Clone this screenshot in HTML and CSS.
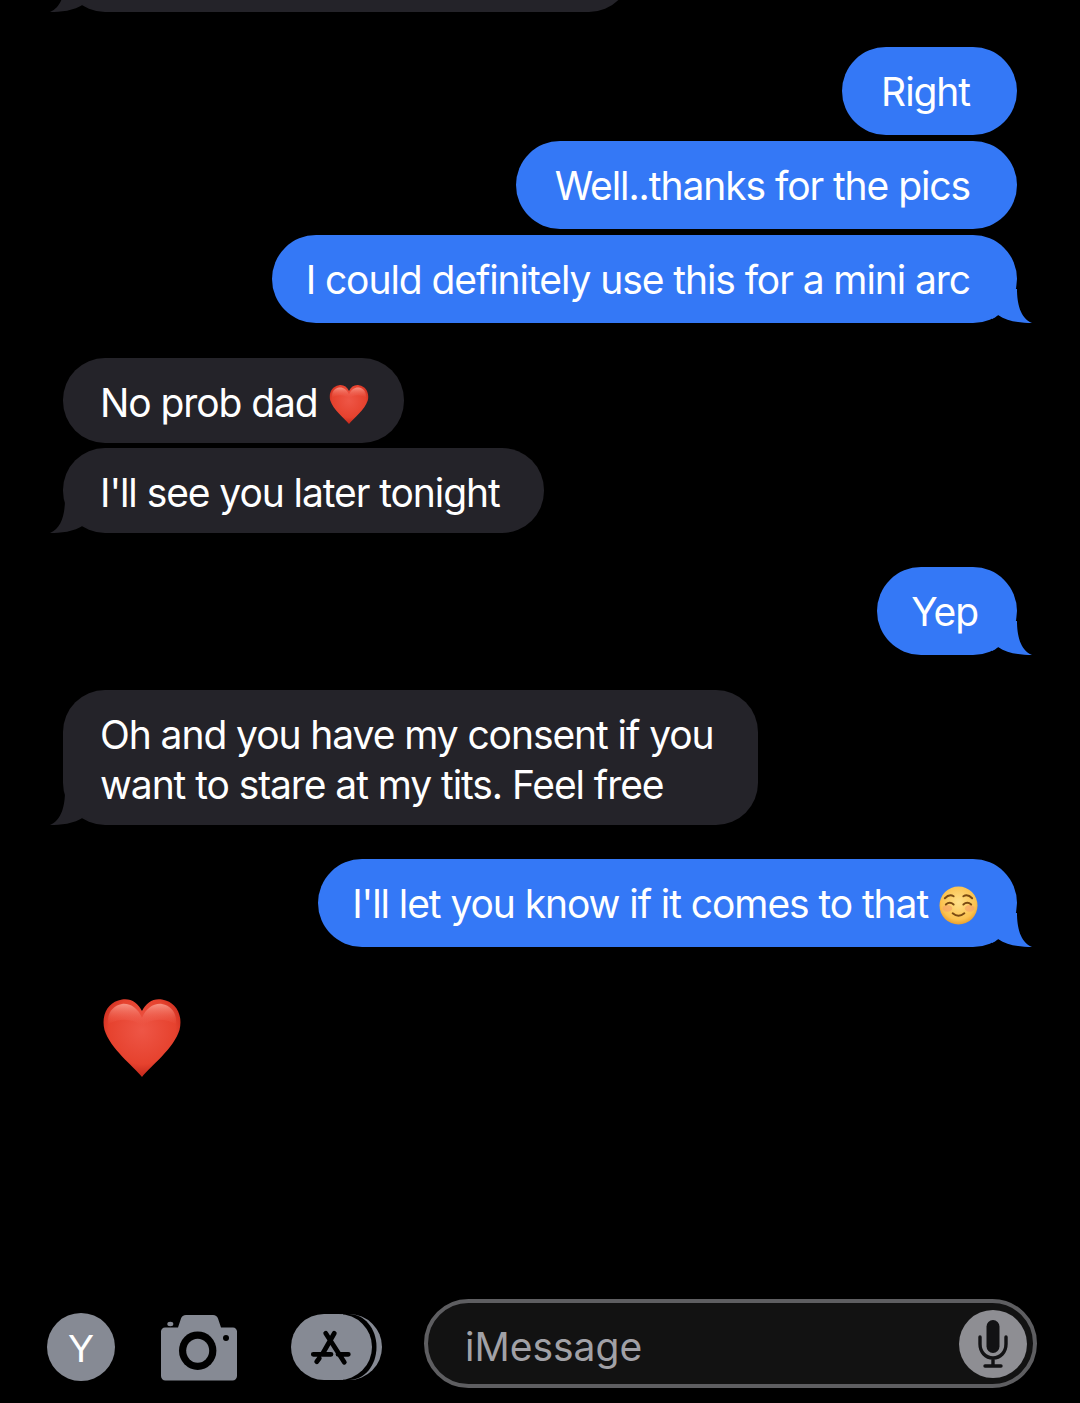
FILE: index.html
```html
<!DOCTYPE html>
<html lang="en">
<head>
<meta charset="utf-8">
<title>iMessage</title>
<link rel="stylesheet" href="styles.css">
</head>
<body>
<svg class="defs" width="0" height="0" aria-hidden="true">
  <defs>
    <radialGradient id="heartFill" cx="0.5" cy="0.4" r="0.62">
      <stop offset="0" stop-color="#ee5646"/>
      <stop offset="0.7" stop-color="#e6422e"/>
      <stop offset="1" stop-color="#bf2419"/>
    </radialGradient>
    <linearGradient id="heartShine" x1="0" y1="0" x2="0" y2="1">
      <stop offset="0" stop-color="#ffb4a6" stop-opacity="0.7"/>
      <stop offset="1" stop-color="#f0584a" stop-opacity="0"/>
    </linearGradient>
    <radialGradient id="faceFill" cx="0.5" cy="0.42" r="0.6">
      <stop offset="0" stop-color="#ffe08a"/>
      <stop offset="0.75" stop-color="#fbc24f"/>
      <stop offset="1" stop-color="#e69a2a"/>
    </radialGradient>
    <symbol id="heart" viewBox="0 0 80 80">
      <path d="M40 79C31 68 8 50 2.500 32C-1 18 5 4 20 1.500C29 0 36 5 40 13C44 5 51 0 60 1.500C75 4 81 18 77.500 32C72 50 49 68 40 79Z" fill="url(#heartFill)"/>
      <path d="M40 20C36 10 28 5 20 6C10 8 5 16 6 26C18 20 30 20 40 28C50 20 62 20 74 26C75 16 70 8 60 6C52 5 44 10 40 20Z" fill="url(#heartShine)"/>
    </symbol>
    <symbol id="tailRight" viewBox="0 0 40 34">
      <path d="M0 0H25C25 14 28 29 40 34C30 34 16 33 6 26C4 28 2 29 0 30Z"/>
    </symbol>
    <symbol id="tailLeft" viewBox="0 0 40 34">
      <path d="M40 0H15C15 14 12 29 0 34C10 34 24 33 34 26C36 28 38 29 40 30Z"/>
    </symbol>
  </defs>
</svg>
<main class="screen">
  <section class="thread">
    <div class="row row-in row-clipped"><div class="bubble in tailed wide-top"><span class="spacer">&nbsp;</span><svg class="tail tail-in"><use href="#tailLeft"/></svg></div></div>
    <div class="row row-out gap-l"><div class="bubble out roomy">Right</div></div>
    <div class="row row-out gap-s"><div class="bubble out roomy">Well..thanks for the pics</div></div>
    <div class="row row-out gap-s"><div class="bubble out tailed">I could definitely use this for a mini arc<svg class="tail tail-out"><use href="#tailRight"/></svg></div></div>
    <div class="row row-in gap-l"><div class="bubble in snug-in">No prob dad <svg class="emoji emoji-heart"><use href="#heart"/></svg></div></div>
    <div class="row row-in gap-xs"><div class="bubble in tailed">I'll see you later tonight<svg class="tail tail-in"><use href="#tailLeft"/></svg></div></div>
    <div class="row row-out gap-m"><div class="bubble out tailed snug-out">Yep<svg class="tail tail-out"><use href="#tailRight"/></svg></div></div>
    <div class="row row-in gap-l"><div class="bubble in tailed">Oh and you have my consent if you<br>want to stare at my tits. Feel free<svg class="tail tail-in"><use href="#tailLeft"/></svg></div></div>
    <div class="row row-out gap-m"><div class="bubble out tailed snug-out">I'll let you know if it comes to that <svg class="emoji emoji-face" viewBox="0 0 40 40">
      <circle cx="20" cy="20" r="19.500" fill="url(#faceFill)"/>
      <ellipse cx="8.500" cy="23" rx="5" ry="3.500" fill="#f59a6a" opacity="0.55"/>
      <ellipse cx="31.500" cy="23" rx="5" ry="3.500" fill="#f59a6a" opacity="0.55"/>
      <path d="M6 12.500Q10.500 8 15 10.500M25 10.500Q29.500 8 34 12.500M7 19Q11 15.500 15 19M25 19Q29 15.500 33 19M14 28Q20 33 26 28" fill="none" stroke="#7a4a12" stroke-width="2" stroke-linecap="round"/>
    </svg><svg class="tail tail-out"><use href="#tailRight"/></svg></div></div>
    <div class="row row-in big-heart"><svg class="emoji-large"><use href="#heart"/></svg></div>
  </section>

  <footer class="composer">
    <div class="avatar">Y</div>
    <svg class="camera" viewBox="0 0 76 66">
      <path class="glyph-fill" d="M4 12.500H17L20 3.500C20.800 1.200 22.500 0 25 0H52C54.500 0 56.200 1.200 57 3.500L60 12.500H72C74.200 12.500 76 14.300 76 16.500V61C76 63.500 74 65.500 71.500 65.500H4.500C2 65.500 0 63.500 0 61V16.500C0 14.300 1.800 12.500 4 12.500Z"/>
      <ellipse class="glyph-fill" cx="9.300" cy="9" rx="3" ry="2.200"/>
      <ellipse cx="36.700" cy="35.700" rx="18.700" ry="19.300" fill="#000"/>
      <ellipse class="glyph-fill" cx="36.700" cy="35.700" rx="11.500" ry="12"/>
      <circle cx="65" cy="23" r="3" fill="#000"/>
    </svg>
    <svg class="appstore" viewBox="0 0 91 66">
      <rect class="glyph-fill" x="20" y="0" width="71" height="66" rx="33"/>
      <path d="M52 0H58C73 0 85.500 14 85.500 33S73 66 58 66H52Z" fill="#000"/>
      <rect class="glyph-fill" x="0" y="0" width="81" height="66" rx="33"/>
      <path d="M34.700 19.300L53.300 48.300M43.300 19.300L31.300 40.300M22.300 40.300H40M47 40.300H57.300M25.700 47.700L28.300 44.300" fill="none" stroke="#000" stroke-width="4.800" stroke-linecap="round"/>
    </svg>
    <div class="field">
      <span class="placeholder">iMessage</span>
      <div class="mic">
        <svg class="mic-glyph" viewBox="0 0 30 48">
          <rect x="8.500" y="0" width="13" height="33" rx="6.500" fill="#121214"/>
          <path d="M2 17V24C2 32 7.500 38 15 38S28 32 28 24V17M15 38V45M7 46H23" fill="none" stroke="#121214" stroke-width="3.400" stroke-linecap="round"/>
        </svg>
      </div>
    </div>
  </footer>
</main>
</body>
</html>
```
FILE: styles.css
```css
* { box-sizing: border-box; }
html, body { margin: 0; padding: 0; background: #000; }
body { width: 1080px; height: 1403px; overflow: hidden; }
.defs { position: absolute; }
.screen {
  display: flex;
  flex-direction: column;
  width: 1080px;
  height: 1403px;
  font-family: Inter, "Liberation Sans", sans-serif;
  color: #fff;
}
.thread { display: flex; flex-direction: column; }
.row { display: flex; }
.row-out { justify-content: flex-end; padding-right: 63px; }
.row-in { justify-content: flex-start; padding-left: 63px; }
.row-clipped { margin-top: -73px; }
.gap-l { margin-top: 35px; }
.gap-m { margin-top: 34px; }
.gap-s { margin-top: 6px; }
.gap-xs { margin-top: 5px; }
.bubble {
  position: relative;
  font-size: 39px;
  letter-spacing: -1.08px;
  line-height: 50px;
  white-space: nowrap;
  border-radius: 44px;
}
.out {
  background: #3478f6;
  padding: 20px 47px 18px 34px;
  fill: #3478f6;
}
.in {
  background: #242329;
  padding: 19.500px 44px 15.500px 37px;
  fill: #242329;
  border-radius: 42px;
}
.roomy { padding-left: 39px; }
.snug-out { padding-right: 39px; }
.snug-in { padding-right: 35px; }
.wide-top { width: 568px; }
.spacer { display: inline-block; }
.tail { position: absolute; bottom: 0; width: 40px; height: 34px; }
.tail-out { right: -15px; }
.tail-in { left: -13px; }
.emoji { display: inline-block; vertical-align: middle; }
.emoji-heart { width: 40px; height: 41px; margin-left: 1px; margin-top: -3px; }
.emoji-face { width: 39px; height: 39px; margin-left: 1px; margin-top: -4px; }
.big-heart { margin-top: 51px; padding-left: 102px; }
.emoji-large { width: 80px; height: 80px; }
.composer {
  display: flex;
  align-items: flex-end;
  margin-top: auto;
  padding: 0 43px 15px 47px;
}
.avatar {
  width: 68px;
  height: 68px;
  margin-bottom: 7px;
  padding-top: 3px;
  border-radius: 50%;
  background: #868a94;
  display: flex;
  align-items: center;
  justify-content: center;
  font-size: 39px;
  color: #fff;
  font-family: "Liberation Sans", sans-serif;
}
.glyph-fill { fill: #868a94; }
.camera { width: 76px; height: 66px; margin-left: 46px; margin-bottom: 7px; }
.appstore { width: 91px; height: 66px; margin-left: 54px; margin-bottom: 8px; }
.field {
  flex: 1;
  height: 89px;
  margin-left: 42px;
  border: 4px solid #5e5e61;
  border-radius: 45px;
  background: #121212;
  display: flex;
  align-items: center;
  justify-content: space-between;
  padding: 0 6px 0 37px;
}
.placeholder { font-size: 39px; color: #a1a1a6; padding-top: 6px; }
.mic {
  width: 68px;
  height: 68px;
  border-radius: 50%;
  background: #8e8e93;
  display: flex;
  align-items: center;
  justify-content: center;
}
.mic-glyph { width: 30px; height: 48px; }
```
